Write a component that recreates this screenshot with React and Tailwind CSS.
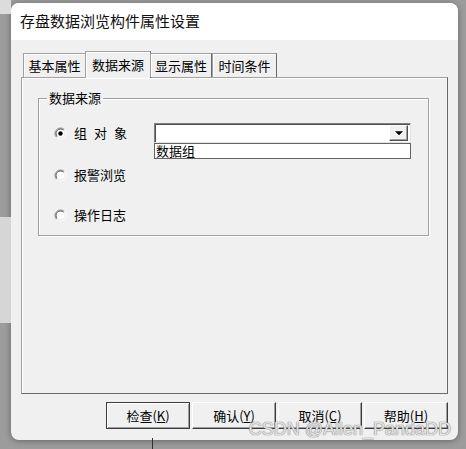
import React from 'react';

const tabs = [
    { label: '基本属性', w: 'w-[63px]', active: false },
    { label: '数据来源', w: 'w-[66px]', active: true },
    { label: '显示属性', w: 'w-[62px]', active: false },
    { label: '时间条件', w: 'w-[65px]', active: false },
];

// classic win32 radio: sunken ring, white well, black dot when checked
function Radio({ checked }) {
    return (
        <svg width="13" height="13" viewBox="0 0 13 13" className="shrink-0">
            <circle cx="6.5" cy="6.5" r="5" fill="#ffffff" />
            <path d="M10.4 2.6A5.5 5.5 0 0 0 2.6 10.4" fill="none" stroke="#8a8a8a" strokeWidth="1" />
            <path d="M2.6 10.4A5.5 5.5 0 0 0 10.4 2.6" fill="none" stroke="#ffffff" strokeWidth="1" />
            <path d="M9.7 3.3A4.5 4.5 0 0 0 3.3 9.7" fill="none" stroke="#505050" strokeWidth="1" />
            <path d="M3.3 9.7A4.5 4.5 0 0 0 9.7 3.3" fill="none" stroke="#e6e6e6" strokeWidth="1" />
            {checked && <circle cx="6.5" cy="6.5" r="2.2" fill="#000000" />}
        </svg>
    );
}

function Button({ label, hot, primary }) {
    const frame = primary
        ? 'border border-[#3c3c3c] shadow-[inset_1px_1px_0_#ffffff,inset_-1px_-1px_0_#a0a0a0]'
        : 'border border-white border-r-[#3c3c3c] border-b-[#3c3c3c] shadow-[inset_-1px_-1px_0_#a0a0a0]';
    return (
        <div className={`w-[84px] h-[27px] flex items-center justify-center bg-[#f0f0f0] text-[13px] text-black ${frame}`}>
            {label}(<span className="underline">{hot}</span>)
        </div>
    );
}

export default function App() {
    return (
        <div className="relative w-[466px] h-[449px] overflow-hidden bg-[#9c9c9c] font-['Noto_Sans_CJK_SC',sans-serif]">
            {/* desktop bits behind the dialog */}
            <div className="absolute left-0 top-0 w-[11px] h-[14px] bg-[#dcdcdc]" />
            <div className="absolute left-0 top-[217px] w-[11px] h-[106px] bg-[#d6d6d6]" />
            <div className="absolute left-[152px] top-[438px] w-px h-[11px] bg-[#303030]" />

            <div className="pt-[3px] pl-[11px]">
                <div className="w-[447px] h-[437px] rounded-[8px] overflow-hidden bg-[#f0f0f0] shadow-[0_1px_6px_rgba(0,0,0,0.35)]">
                    {/* title bar */}
                    <div className="h-[37px] bg-white flex items-center pl-[9px] text-[15px] text-[#111]">
                        存盘数据浏览构件属性设置
                    </div>

                    <div className="px-[10px] pt-[11px]">
                        {/* tabs */}
                        <div className="flex items-end pl-[2px] h-[26px] relative z-10">
                            {tabs.map((t) =>
                                t.active ? (
                                    <div
                                        key={t.label}
                                        className={`${t.w} h-[27px] -mb-px -mx-[1px] flex items-start justify-center pt-[3px] bg-[#f0f0f0] border border-b-0 border-[#a0a0a0] border-r-[#696969] shadow-[inset_1px_1px_0_#ffffff] text-[13px] text-black`}
                                    >
                                        {t.label}
                                    </div>
                                ) : (
                                    <div
                                        key={t.label}
                                        className={`${t.w} h-[24px] flex items-center justify-center bg-[#f0f0f0] border border-b-0 border-[#a0a0a0] border-r-[#696969] shadow-[inset_1px_1px_0_#ffffff] text-[13px] text-black`}
                                    >
                                        {t.label}
                                    </div>
                                )
                            )}
                        </div>

                        {/* tab page */}
                        <div className="h-[317px] border border-[#a0a0a0] border-r-[#696969] border-b-[#696969] shadow-[inset_1px_1px_0_#ffffff] pt-[12px] pl-[16px]">
                            <fieldset className="w-[391px] m-0 p-0 border border-[#a0a0a0] shadow-[inset_1px_1px_0_#ffffff,1px_1px_0_#ffffff]">
                                <legend className="ml-[8px] px-[2px] text-[13px] leading-[16px] text-black">数据来源</legend>
                                <div className="pl-[15px] pt-[17px] pb-[10px] flex flex-col text-[13px] text-black">
                                    <div className="h-[20px] flex items-center">
                                        <Radio checked />
                                        <div className="ml-[7px] w-[80px] flex gap-[7px]">
                                            <span>组</span>
                                            <span>对</span>
                                            <span>象</span>
                                        </div>
                                        <div className="relative">
                                            <div className="w-[257px] h-[20px] bg-white border border-[#808080] border-r-[#e3e3e3] border-b-[#e3e3e3] shadow-[inset_1px_1px_0_#505050] flex justify-end items-center pr-[2px]">
                                                <div className="w-[19px] h-[16px] bg-[#f0f0f0] border border-white border-r-[#505050] border-b-[#505050] shadow-[inset_-1px_-1px_0_#a0a0a0] flex items-center justify-center">
                                                    <svg width="8" height="5" viewBox="0 0 8 5">
                                                        <path d="M0.5 0.5H7.5L4 4Z" fill="#000" stroke="#000" strokeWidth="0.5" />
                                                    </svg>
                                                </div>
                                            </div>
                                            <div className="absolute left-0 top-[20px] w-[257px] h-[16px] bg-white border border-[#646464] text-[13px] leading-[14px] pl-[1px]">
                                                数据组
                                            </div>
                                        </div>
                                    </div>
                                    <div className="mt-[22px] h-[20px] flex items-center">
                                        <Radio />
                                        <span className="ml-[7px]">报警浏览</span>
                                    </div>
                                    <div className="mt-[20px] h-[20px] flex items-center">
                                        <Radio />
                                        <span className="ml-[7px]">操作日志</span>
                                    </div>
                                </div>
                            </fieldset>
                        </div>

                        {/* buttons */}
                        <div className="mt-[8px] flex justify-end gap-[2px]">
                            <Button label="检查" hot="K" primary />
                            <Button label="确认" hot="Y" />
                            <Button label="取消" hot="C" />
                            <Button label="帮助" hot="H" />
                        </div>
                    </div>
                </div>
            </div>

            {/* watermark */}
            <div className="absolute right-[15px] top-[418px] font-['Liberation_Sans',sans-serif] text-[18px] leading-[22px] text-[rgba(240,240,240,0.9)] [text-shadow:0_0_1px_#7a7a7a,0_0_1px_#7a7a7a]">
                CSDN @Allen_PandaDD
            </div>
        </div>
    );
}
